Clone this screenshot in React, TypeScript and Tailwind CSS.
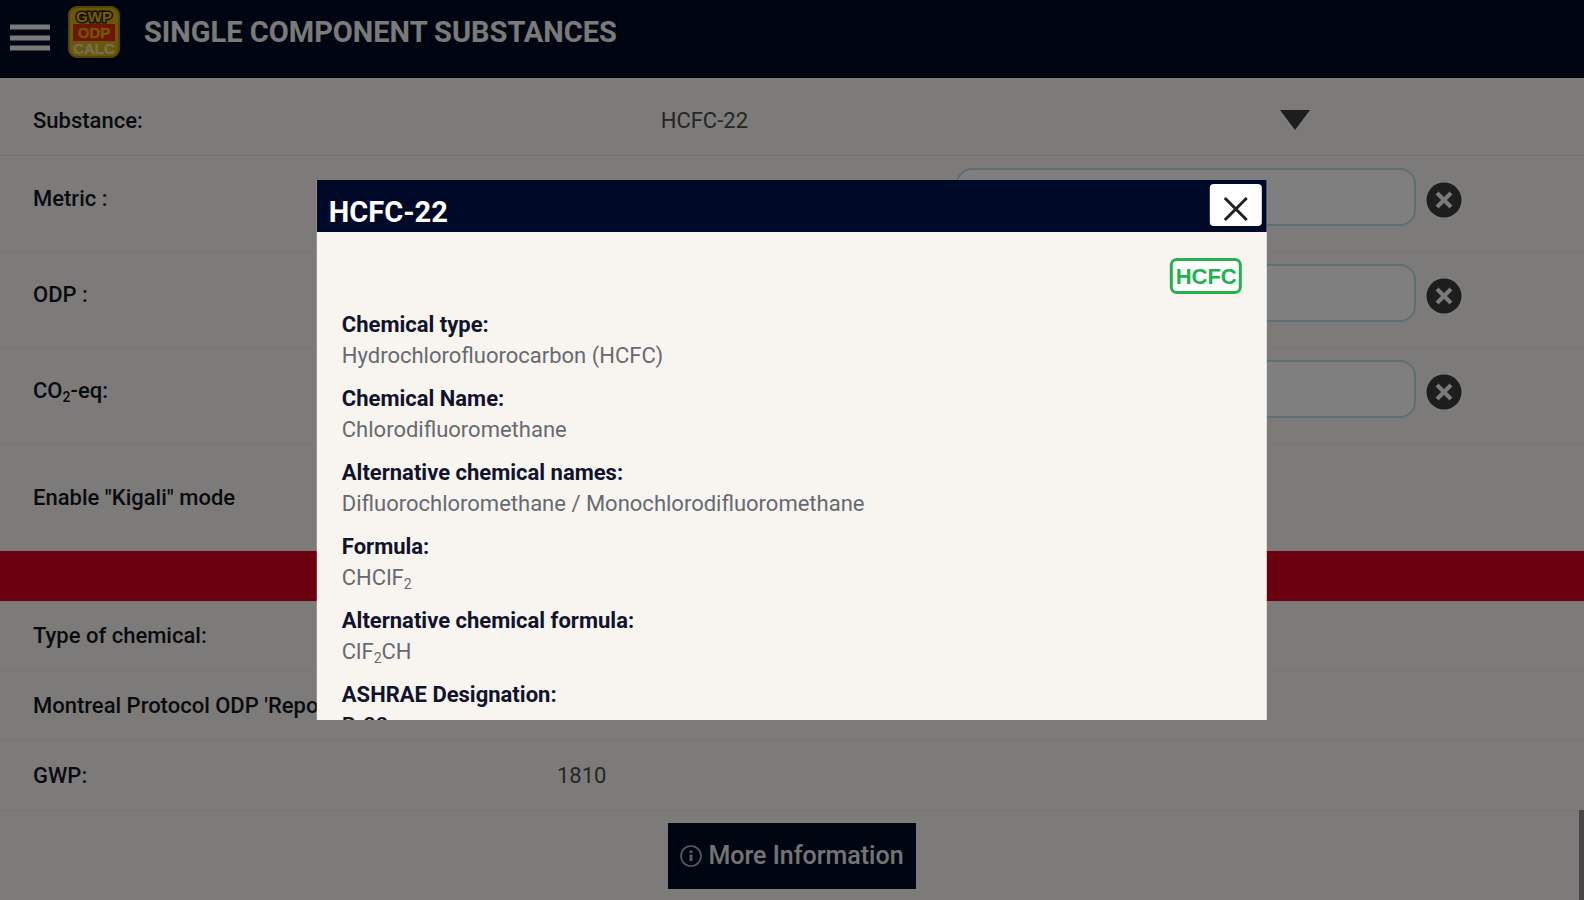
import type { ReactNode } from "react";

type Field = {
  id: string;
  label: ReactNode;
};

type Detail = {
  label: string;
  value: ReactNode;
};

const FIELDS: Field[] = [
  { id: "metric", label: "Metric :" },
  { id: "odp", label: "ODP :" },
  {
    id: "co2",
    label: (
      <>
        CO<Sub>2</Sub>-eq:
      </>
    ),
  },
];

const DETAILS: Detail[] = [
  { label: "Chemical type:", value: "Hydrochlorofluorocarbon (HCFC)" },
  { label: "Chemical Name:", value: "Chlorodifluoromethane" },
  {
    label: "Alternative chemical names:",
    value: "Difluorochloromethane / Monochlorodifluoromethane",
  },
  {
    label: "Formula:",
    value: (
      <>
        CHClF<Sub>2</Sub>
      </>
    ),
  },
  {
    label: "Alternative chemical formula:",
    value: (
      <>
        ClF<Sub>2</Sub>CH
      </>
    ),
  },
  {
    label: "ASHRAE Designation:",
    value: <span className="font-medium text-[#14161f]">R-22</span>,
  },
];

const RESULTS = [
  { label: "Type of chemical:", value: "" },
  { label: "Montreal Protocol ODP 'Reported':", value: "" },
  { label: "GWP:", value: "1810" },
];

function Sub({ children }: { children: ReactNode }) {
  return <sub className="text-[14px]">{children}</sub>;
}

function Logo() {
  return (
    <svg
      viewBox="0 0 52 52"
      className="h-[52px] w-[52px]"
      fontFamily="Liberation Sans, sans-serif"
      fontWeight="700"
      fontSize="15"
      textAnchor="middle"
      aria-hidden="true"
    >
      <rect x="1" y="1" width="50" height="50" rx="8" fill="#d8ac10" stroke="#a88c14" strokeWidth="2" />
      <rect x="5" y="18" width="42" height="17" fill="#d82c10" />
      <text x="26" y="16" fill="#e8b80c" stroke="#2a2400" strokeWidth="3" paintOrder="stroke">GWP</text>
      <text x="26" y="32" fill="#f0a010" stroke="#f0a010" strokeWidth="0.5">ODP</text>
      <text x="26" y="48" fill="#e8dca8" stroke="#e8dca8" strokeWidth="0.5">CALC</text>
    </svg>
  );
}

function ClearIcon() {
  return (
    <svg viewBox="0 0 36 36" className="h-9 w-9" aria-hidden="true">
      <circle cx="18" cy="18" r="17.5" fill="#3a3a3a" />
      <path d="M11 11 25 25M25 11 11 25" stroke="#f9f6f2" strokeWidth="4" />
    </svg>
  );
}

function Header() {
  return (
    <header className="flex h-[78px] items-start bg-[#000a24] pl-[10px]">
      <button type="button" aria-label="Open menu" className="mt-[23px]">
        <svg viewBox="0 0 40 28" className="h-7 w-10" aria-hidden="true">
          <path d="M0 4h40M0 15h40M0 25h40" stroke="#f4f4f4" strokeWidth="5" />
        </svg>
      </button>
      <div className="mt-[6px] ml-[18px]">
        <Logo />
      </div>
      <h1 className="mt-3 ml-6 text-[29px] leading-10 font-bold text-[#f4f4f4]">
        SINGLE COMPONENT SUBSTANCES
      </h1>
    </header>
  );
}

function InfoDialog() {
  return (
    <div
      role="dialog"
      aria-modal="true"
      aria-labelledby="dialog-title"
      className="absolute top-[20%] left-1/2 flex h-3/5 w-3/5 -translate-x-1/2 flex-col overflow-hidden bg-[#f8f5f1]"
    >
      <div className="flex h-[52px] shrink-0 items-start justify-between bg-[#000a28] pt-1 pr-[5px] pl-3">
        <h2 id="dialog-title" className="pt-2 text-[29px] leading-10 font-bold text-white">
          HCFC-22
        </h2>
        <button
          type="button"
          aria-label="Close"
          className="flex h-[42px] w-[52px] items-center justify-center rounded-[4px] bg-white pt-2"
        >
          <svg viewBox="0 0 24 24" className="h-6 w-6" aria-hidden="true">
            <path d="M1 1 23 23M23 1 1 23" stroke="#222" strokeWidth="3" />
          </svg>
        </button>
      </div>
      <div className="px-[25px] pt-[26px]">
        <div className="flex justify-end">
          <span className="flex h-9 w-[72px] items-center justify-center rounded-[7px] border-[3px] border-[#22b14c] bg-white font-['Liberation_Sans',sans-serif] text-[22px] font-bold text-[#22b14c]">
            HCFC
          </span>
        </div>
        <dl className="mt-[15px] flex flex-col gap-3 leading-[31px]">
          {DETAILS.map((detail) => (
            <div key={detail.label}>
              <dt className="font-bold text-[#10132b]">{detail.label}</dt>
              <dd className="text-[#666a70]">{detail.value}</dd>
            </div>
          ))}
        </dl>
      </div>
    </div>
  );
}

export default function App() {
  return (
    <div className="relative h-screen overflow-hidden bg-[#f9f6f2] font-[Roboto,sans-serif] text-[22px] text-[#14161f]">
      <Header />

      <main className="font-medium">
        <div className="flex h-[78px] items-center border-b border-[#e6e3df] pt-2 pl-[33px]">
          <label htmlFor="substance" className="flex-1">
            Substance:
          </label>
          <div className="relative mr-[17%] w-[41.5%]">
            <select
              id="substance"
              className="-ml-4 w-full appearance-none bg-transparent font-normal text-[#4c4c4c]"
            >
              <option>HCFC-22</option>
            </select>
            <svg
              viewBox="0 0 30 20"
              className="pointer-events-none absolute top-1.5 right-2.5 h-5 w-[30px]"
              aria-hidden="true"
            >
              <path d="M0 0h30L15 20z" fill="#3a3a3a" />
            </svg>
          </div>
        </div>

        {FIELDS.map((field) => (
          <div
            key={field.id}
            className="flex h-24 items-start border-b border-[#f1eeea] pt-3 pr-[122px] pl-[33px]"
          >
            <label htmlFor={field.id} className="flex-1 pt-3.5">
              {field.label}
            </label>
            <input
              id={field.id}
              type="text"
              className="mr-[10px] h-[58px] w-[460px] rounded-[16px] border-2 border-[#bcdde4] bg-white px-4"
            />
            <button type="button" aria-label="Clear" className="mt-[14px]">
              <ClearIcon />
            </button>
          </div>
        ))}

        <div className="flex h-[107px] items-center pl-[33px]">
          <label htmlFor="kigali" className="w-2/5">
            Enable "Kigali" mode
          </label>
          <input id="kigali" type="checkbox" className="h-6 w-6" />
        </div>

        <div className="h-[50px] bg-[#d60020]" />

        <dl>
          {RESULTS.map((result) => (
            <div
              key={result.label}
              className="flex h-[70px] items-center border-b border-[#f1eeea] pl-[33px]"
            >
              <dt className="w-[524px]">{result.label}</dt>
              <dd className="font-normal text-[#4c4c4c]">{result.value}</dd>
            </div>
          ))}
        </dl>

        <div className="flex justify-center pt-3">
          <button
            type="button"
            className="flex h-[66px] w-[248px] items-center justify-center gap-[6px] bg-[#000a24] text-[25px] text-[#e8e8e8]"
          >
            <svg viewBox="0 0 22 22" className="h-[22px] w-[22px]" fill="none" stroke="#b8b8b8" aria-hidden="true">
              <circle cx="11" cy="11" r="10" strokeWidth="1.6" />
              <path d="M11 5.500v2.500M11 9.500v6.500" strokeWidth="3" />
            </svg>
            More Information
          </button>
        </div>
      </main>

      <div className="absolute right-0 bottom-0 h-[90px] w-[5px] bg-[#8c8c8c]" />
      <div className="absolute inset-0 bg-black/50" />
      <InfoDialog />
    </div>
  );
}
